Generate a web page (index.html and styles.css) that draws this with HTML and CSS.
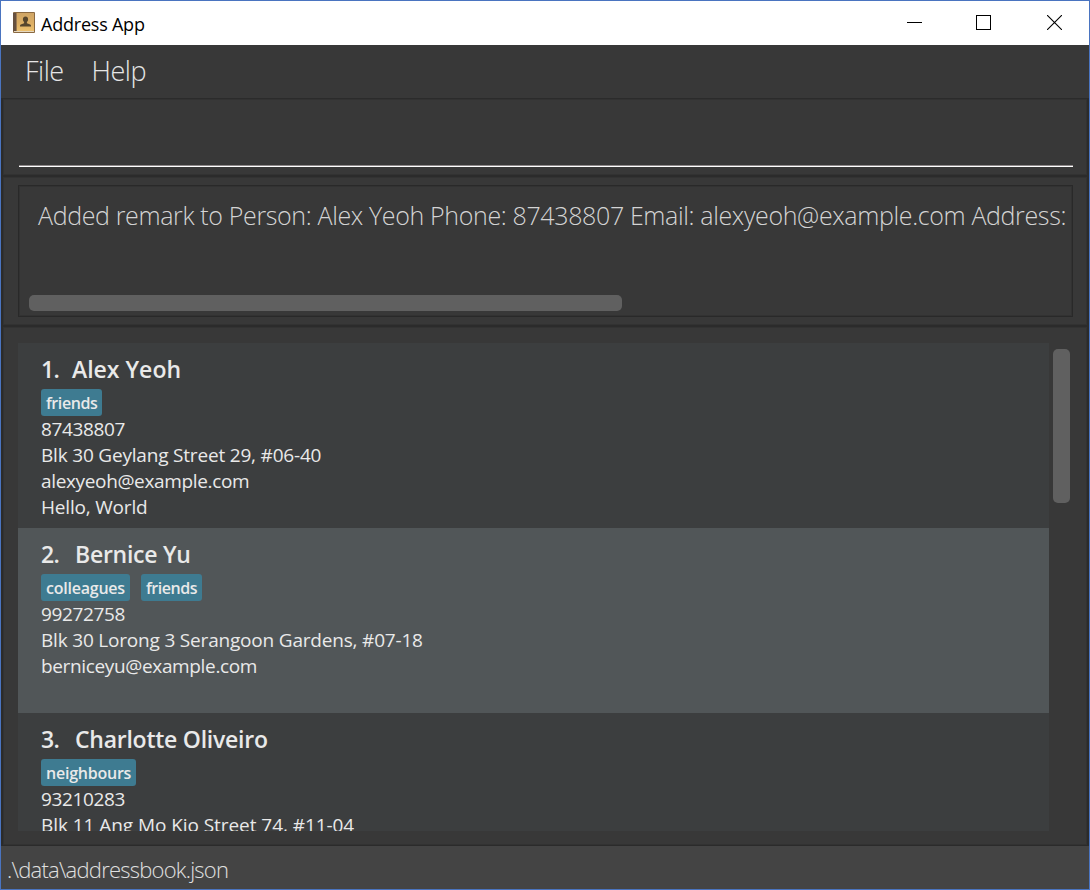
FILE: index.html
```html
<!DOCTYPE html>
<html lang="en">
<head>
<meta charset="utf-8">
<title>Address App</title>
<link rel="stylesheet" href="styles.css">
</head>
<body>
<div class="window">
  <header class="titlebar">
    <svg class="app-icon" width="22" height="22" viewBox="0 0 22 22">
      <defs><linearGradient id="cover" x1="0" y1="0" x2="0" y2="1"><stop offset="0" stop-color="#cfa566"/><stop offset=".55" stop-color="#dcae64"/><stop offset="1" stop-color="#ecc06e"/></linearGradient></defs>
      <rect x="0" y="0" width="22" height="21" rx="1" fill="#8a6941"/>
      <rect x="0" y="1" width="3" height="18" fill="#66503f"/>
      <rect x="3" y="1" width="1" height="18" fill="#9b7a52"/>
      <rect x="4" y="1" width="17" height="18" fill="url(#cover)"/>
      <rect x="1" y="19" width="20" height="1" fill="#e5d8c0"/>
      <path d="M12.500 4.500c1.700 0 2.600 1.200 2.600 2.700 0 1.300-.6 2.200-1.200 2.800v1.200l3.300 1.200c.6.300.8.800.8 1.600v.6H7v-.6c0-.8.200-1.300.8-1.600l3.300-1.200V10c-.6-.6-1.200-1.500-1.200-2.800 0-1.500.9-2.700 2.600-2.700z" fill="#56452d"/>
    </svg>
    <span class="title">Address App</span>
    <div class="controls">
      <svg width="15" height="15" viewBox="0 0 15 15" shape-rendering="crispEdges"><path d="M0 7.500H15" stroke="#000"/></svg>
      <svg width="15" height="15" viewBox="0 0 15 15"><rect x=".5" y=".5" width="14" height="14" fill="none" stroke="#000"/></svg>
      <svg class="close" width="15" height="15" viewBox="0 0 15 15"><path d="M0 0L15 15M15 0L0 15" stroke="#000" stroke-width="1.100"/></svg>
    </div>
  </header>
  <nav class="menu"><span>File</span><span>Help</span></nav>
  <section class="pane command"><div class="field"></div></section>
  <section class="pane result">
    <div class="result-box">
      <div class="message">Added remark to Person: Alex Yeoh Phone: 87438807 Email: alexyeoh@example.com Address:</div>
      <div class="h-thumb"></div>
    </div>
  </section>
  <section class="pane people">
    <div class="list">
      <article class="card">
        <h2><span class="num">1.</span><span>Alex Yeoh</span></h2>
        <div class="tags"><span class="tag narrow">friends</span></div>
        <p class="tight">87438807</p>
        <p>Blk 30 Geylang Street 29, #06-40</p>
        <p class="tight">alexyeoh@example.com</p>
        <p>Hello, World</p>
      </article>
      <article class="card alt">
        <h2 class="tight"><span class="num wide">2.</span><span>Bernice Yu</span></h2>
        <div class="tags"><span class="tag">colleagues</span><span class="tag narrow">friends</span></div>
        <p class="tight">99272758</p>
        <p>Blk 30 Lorong 3 Serangoon Gardens, #07-18</p>
        <p class="tight">berniceyu@example.com</p>
      </article>
      <article class="card">
        <h2 class="tight"><span class="num wide">3.</span><span>Charlotte Oliveiro</span></h2>
        <div class="tags"><span class="tag">neighbours</span></div>
        <p class="tight">93210283</p>
        <p class="loose">Blk 11 Ang Mo Kio Street 74, #11-04</p>
      </article>
    </div>
    <div class="v-thumb"></div>
  </section>
  <footer class="status">.\data\addressbook.json</footer>
</div>
</body>
</html>
```

FILE: styles.css
```css
* { box-sizing: border-box; }
body { margin: 0; font-family: "Open Sans", "Noto Sans", sans-serif; }
.window { width: 1090px; height: 890px; border: 1px solid #4a74c0; background: #383838; display: flex; flex-direction: column; overflow: hidden; }
.titlebar { height: 44px; flex: none; background: #fff; display: flex; align-items: center; padding: 0 27px 0 12px; }
.title { font-size: 18px; letter-spacing: -.22px; color: #000; margin-left: 6px; white-space: nowrap; line-height: 24px; padding-top: 1px; }
.controls { display: flex; gap: 54px; margin-left: auto; padding-bottom: 2px; }
.close { margin-left: 2px; }
.menu { height: 53px; flex: none; padding: 6px 0 0 24px; display: flex; gap: 28px; font-size: 27px; letter-spacing: -.5px; line-height: 39px; font-weight: 300; color: #e6e6e6; }
.pane { flex: none; border: 2px solid #2b2b2b; border-top-width: 1px; border-bottom-width: 1px; box-shadow: inset 0 0 0 1px #323232; }
.command { height: 78px; padding: 66px 14px 0 16px; }
.field { height: 2px; background: #fff; border-top: 1px solid #8d8889; }
.result { height: 150px; padding: 8px 14px 0 15px; }
.result-box { height: 132px; border: 1px solid #292929; box-shadow: inset 0 0 0 1px #323232; padding: 9px 0 0 10px; overflow: hidden; }
.message { height: 100px; padding-left: 9px; font-size: 25px; letter-spacing: -.36px; line-height: 40px; font-weight: 300; color: #d4d4d4; white-space: nowrap; }
.h-thumb { width: 593px; height: 16px; border-radius: 5px; background: #606060; }
.people { height: 520px; padding: 16px 16px 0 15px; display: flex; }
.list { width: 1031px; height: 488px; overflow: hidden; }
.card { height: 185px; background: #3c3e3f; padding: 10px 23px 0; color: #e9e9e9; }
.card.alt { background: #515658; }
h2 { margin: 0; height: 36px; font-size: 23px; line-height: 32px; font-weight: 600; display: flex; }
h2.tight { letter-spacing: -.25px; }
.num { width: 31px; letter-spacing: -.6px; }
.num.wide { width: 34px; }
.tags { display: flex; gap: 11px; height: 27px; }
.tag { height: 27px; border-radius: 3px; background: #3e7b91; padding: 0 5px; font-size: 16px; letter-spacing: -.23px; font-weight: 600; line-height: 28px; }
.tag.narrow { letter-spacing: -.42px; }
p { margin: 0; height: 26px; line-height: 26px; font-size: 19px; letter-spacing: -.19px; white-space: nowrap; }
p.tight { letter-spacing: -.35px; }
p.loose { letter-spacing: -.06px; }
.v-thumb { width: 17px; height: 154px; margin: 6px 0 0 4px; border-radius: 5px; background: #606060; }
.status { flex: 1; background: #444; padding: 3px 0 0 6px; font-size: 22px; letter-spacing: -.77px; line-height: 40px; font-weight: 300; color: #e0e0e0; }
```
